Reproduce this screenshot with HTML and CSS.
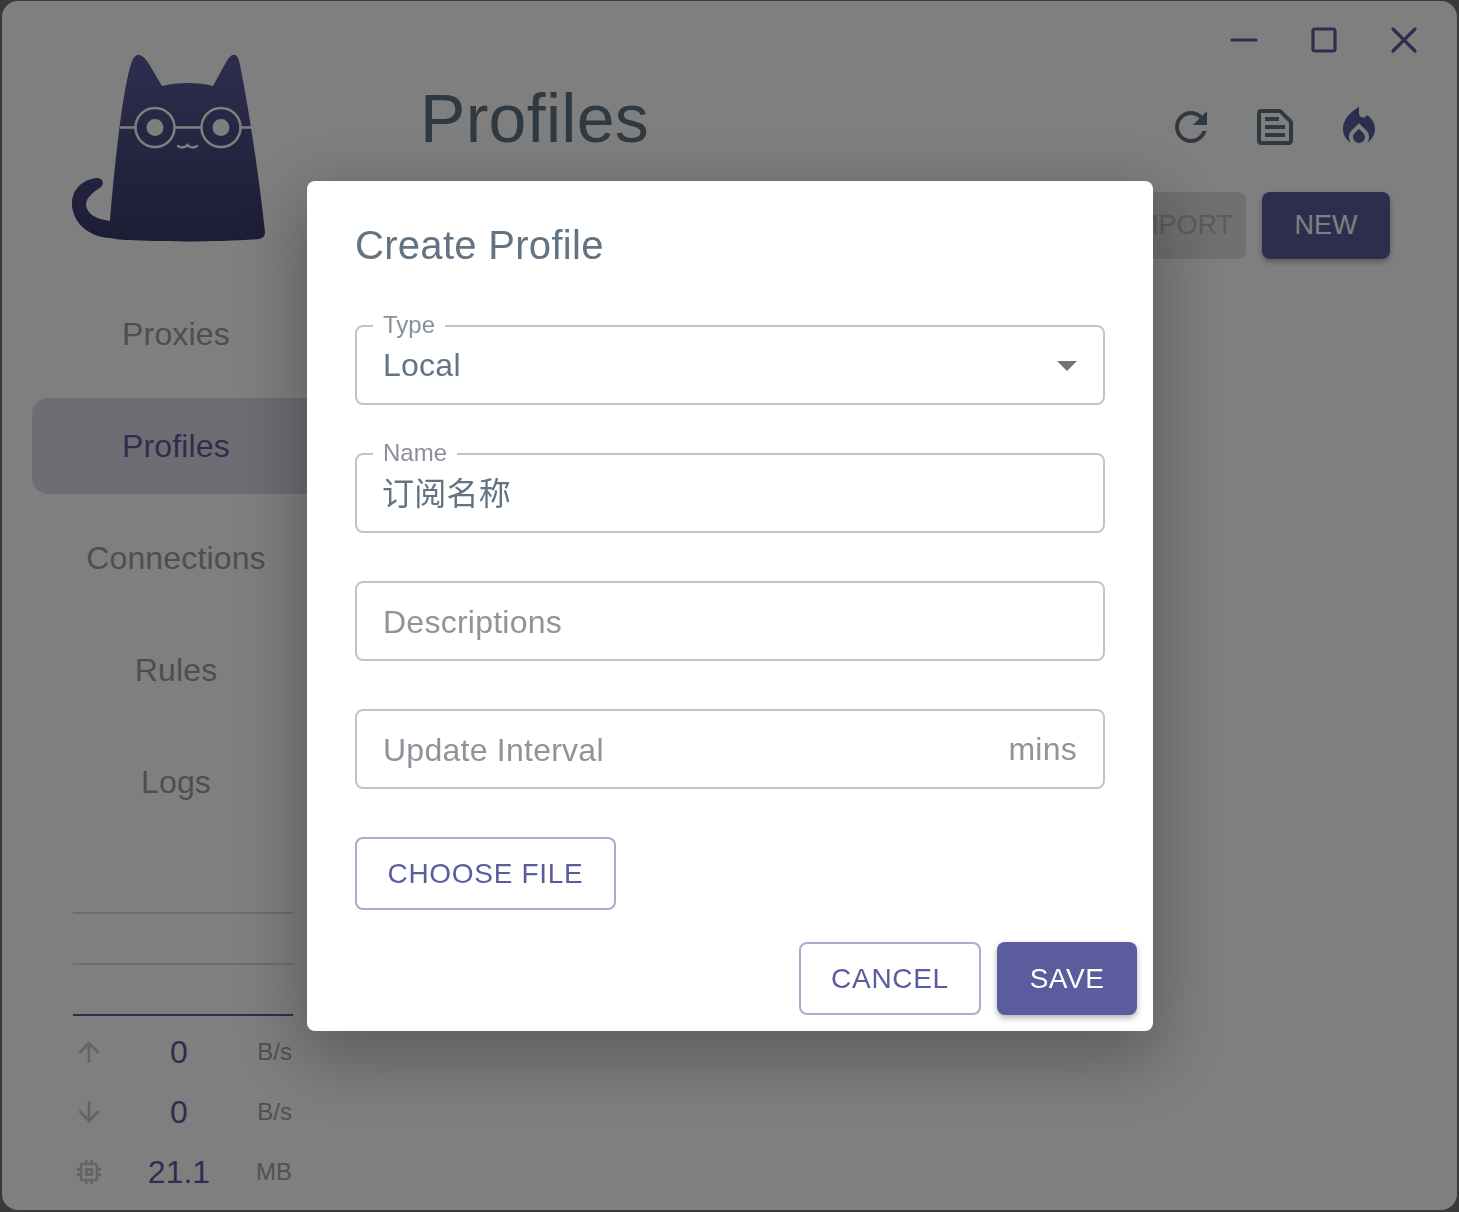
FILE: index.html
```html
<!DOCTYPE html>
<html lang="en">
<head>
    <meta charset="UTF-8">
    <title>Clash Verge</title>
    <link rel="stylesheet" href="styles.css">
</head>
<body>
    <div class="window">
        <aside class="sidebar">
            <svg class="logo" viewBox="0 0 196 188" width="196" height="188">
                <defs>
                    <linearGradient id="catFill" x1="0" y1="0" x2="0" y2="1">
                        <stop offset="0" stop-color="#5b5c9d"/>
                        <stop offset="1" stop-color="#3a3a6b"/>
                    </linearGradient>
                </defs>
                <path fill="url(#catFill)" d="M65 1C69 0 73 4 77 10L90 32C105 28 128 28 141 32L153 10C157 3 160 0 163 1C166 2 167 6 168 11C177 55 188 130 193 178C193 182 191 184 187 185C150 188 90 188 56 186C48 186 44 185 38 184C20 183 2 172 0 152C-1 136 10 126 24 124C30 123 33 129 29 133C20 139 14 144 14 151C15 160 24 165 38 167C42 120 50 35 60 7C61 4 63 2 65 1Z"/>
                <g class="glasses">
                    <path d="M48 73.500H63.500M102.500 73.500H129.500M168.500 73.500H180"/>
                    <circle cx="83" cy="73.500" r="19.500"/>
                    <circle cx="149" cy="73.500" r="19.500"/>
                    <path class="mouth" d="M106 92C109 94 113 94 115.500 91C118 94 122 94 125 92"/>
                </g>
                <circle class="pupil" cx="83" cy="73.500" r="8.500"/>
                <circle class="pupil" cx="149" cy="73.500" r="8.500"/>
            </svg>
            <nav class="nav">
                <a class="nav-item">Proxies</a>
                <a class="nav-item active">Profiles</a>
                <a class="nav-item">Connections</a>
                <a class="nav-item">Rules</a>
                <a class="nav-item">Logs</a>
            </nav>
            <div class="traffic">
                <div class="graph">
                    <div class="graph-line"></div>
                    <div class="graph-line"></div>
                    <div class="graph-line base"></div>
                </div>
                <div class="stat">
                    <svg class="stat-icon" viewBox="0 0 24 24"><path d="M4 12l1.410 1.410L11 7.830V20h2V7.830l5.580 5.590L20 12l-8-8-8 8z"/></svg>
                    <span class="stat-value">0</span>
                    <span class="stat-unit">B/s</span>
                </div>
                <div class="stat">
                    <svg class="stat-icon" viewBox="0 0 24 24"><path d="M20 12l-1.410-1.410L13 16.170V4h-2v12.170l-5.580-5.590L4 12l8 8 8-8z"/></svg>
                    <span class="stat-value">0</span>
                    <span class="stat-unit">B/s</span>
                </div>
                <div class="stat">
                    <svg class="stat-icon" viewBox="0 0 24 24"><path d="M15 9H9v6h6V9zm-2 4h-2v-2h2v2zm8-2V9h-2V7c0-1.100-.9-2-2-2h-2V3h-2v2h-2V3H9v2H7c-1.100 0-2 .9-2 2v2H3v2h2v2H3v2h2v2c0 1.100.9 2 2 2h2v2h2v-2h2v2h2v-2h2c1.100 0 2-.9 2-2v-2h2v-2h-2v-2h2zm-4 6H7V7h10v10z"/></svg>
                    <span class="stat-value">21.1</span>
                    <span class="stat-unit">MB</span>
                </div>
            </div>
        </aside>
        <main class="main">
            <div class="titlebar">
                <svg class="win-icon" viewBox="0 0 24 24"><path d="M6 12H18"/></svg>
                <svg class="win-icon" viewBox="0 0 24 24"><rect x="6.500" y="6.500" width="11" height="11" rx="1"/></svg>
                <svg class="win-icon" viewBox="0 0 24 24"><path d="M6.500 6.500L17.500 17.500M17.500 6.500L6.500 17.500"/></svg>
            </div>
            <header class="page-head">
                <h1 class="page-title">Profiles</h1>
                <div class="head-icons">
                    <svg class="head-icon slate" viewBox="0 0 24 24"><path d="M17.650 6.350C16.200 4.900 14.210 4 12 4c-4.420 0-7.990 3.580-7.990 8s3.570 8 7.990 8c3.730 0 6.840-2.550 7.730-6h-2.080c-.82 2.330-3.040 4-5.650 4-3.310 0-6-2.690-6-6s2.690-6 6-6c1.660 0 3.140.69 4.220 1.780L13 11h7V4l-2.350 2.350z"/></svg>
                    <svg class="head-icon slate" viewBox="0 0 24 24"><path d="M14.170 5 19 9.830V19H5V5h9.170m0-2H5c-1.100 0-2 .9-2 2v14c0 1.100.9 2 2 2h14c1.100 0 2-.9 2-2V9.830c0-.53-.21-1.040-.59-1.410l-4.830-4.830c-.37-.38-.88-.59-1.410-.59zM7 15h10v2H7v-2zm0-4h10v2H7v-2zm0-4h7v2H7V7z"/></svg>
                    <svg class="head-icon" viewBox="0 0 24 24"><path d="M12 12.900l-2.130 2.090c-.56.56-.87 1.290-.87 2.070C9 18.680 10.350 20 12 20s3-1.320 3-2.940c0-.78-.31-1.520-.87-2.070L12 12.900z"/><path d="M16 6l-.44.55C14.380 8.020 12 7.190 12 5.300V2S4 6 4 13c0 2.920 1.560 5.470 3.890 6.860-.56-.79-.89-1.760-.89-2.800 0-1.320.52-2.560 1.470-3.500L12 10.100l3.530 3.470c.95.93 1.470 2.170 1.470 3.500 0 1.020-.31 1.960-.85 2.750 1.890-1.150 3.290-3.060 3.710-5.300.66-3.460-1.060-6.770-3.860-8.520z"/></svg>
                </div>
            </header>
            <div class="head-actions">
                <button class="btn btn-disabled">IMPORT</button>
                <button class="btn btn-new">NEW</button>
            </div>
        </main>
    </div>

    <div class="backdrop"></div>

    <div class="dialog">
        <h2 class="dialog-title">Create Profile</h2>
        <div class="dialog-body">
            <div class="field">
                <span class="field-label">Type</span>
                <span class="field-value">Local</span>
                <span class="caret"></span>
            </div>
            <div class="field">
                <span class="field-label">Name</span>
                <span class="field-value cjk">订阅名称</span>
            </div>
            <div class="field">
                <span class="field-hint">Descriptions</span>
            </div>
            <div class="field">
                <span class="field-hint">Update Interval</span>
                <span class="field-suffix">mins</span>
            </div>
            <button class="btn btn-outline btn-file">CHOOSE FILE</button>
        </div>
        <div class="dialog-actions">
            <button class="btn btn-outline btn-cancel">CANCEL</button>
            <button class="btn btn-save">SAVE</button>
        </div>
    </div>
</body>
</html>
```

FILE: styles.css
```css
* {
    margin: 0;
    padding: 0;
    box-sizing: border-box;
    font-family: 'Liberation Sans', Arial, 'Noto Sans CJK SC', sans-serif;
}

html, body {
    height: 100%;
    overflow: hidden;
    background: #747474;
}

.window {
    margin: 1px 2px 2px;
    height: 1209px;
    display: flex;
    background: #fff;
    border-radius: 16px;
    overflow: hidden;
}

.sidebar {
    width: 348px;
    padding: 53px 30px 0;
    flex-shrink: 0;
    display: flex;
    flex-direction: column;
    align-items: center;
}

.logo {
    margin-left: -13px;
    flex-shrink: 0;
}

.glasses {
    fill: none;
    stroke: #fff;
    stroke-width: 2.500;
}

.mouth {
    stroke-linecap: round;
}

.pupil {
    fill: #fff;
}

.nav {
    width: 288px;
    margin-top: 44px;
    display: flex;
    flex-direction: column;
    gap: 16px;
}

.nav-item {
    height: 96px;
    display: flex;
    align-items: center;
    justify-content: center;
    font-size: 32px;
    letter-spacing: 0.15px;
    color: #9c9da3;
    border-radius: 16px;
}

.nav-item.active {
    background: #dcdbe6;
    color: #5b5c9d;
}

.traffic {
    width: 220px;
    margin-top: 82px;
    margin-left: 14px;
}

.graph {
    height: 104px;
    display: flex;
    flex-direction: column;
    justify-content: space-between;
}

.graph-line {
    height: 2px;
    background: #dcdcdc;
}

.graph-line.base {
    background: #5b5c9d;
}

.stat {
    height: 60px;
    display: flex;
    align-items: center;
}

.graph + .stat {
    margin-top: 6px;
}

.stat-icon {
    width: 32px;
    height: 32px;
    fill: #c8c8c8;
    flex-shrink: 0;
}

.stat-value {
    flex: 1;
    text-align: center;
    font-size: 32px;
    color: #5b5c9d;
}

.stat-unit {
    width: 40px;
    padding-right: 1px;
    text-align: right;
    font-size: 24px;
    color: #a2a2a2;
}

.main {
    flex: 1;
    padding-right: 67px;
    display: flex;
    flex-direction: column;
}

.titlebar {
    height: 78px;
    margin-right: -67px;
    padding-right: 29px;
    display: flex;
    justify-content: flex-end;
    align-items: center;
    gap: 32px;
}

.win-icon {
    width: 48px;
    height: 48px;
    fill: none;
    stroke: #5b5c9d;
    stroke-width: 1.600;
    stroke-linecap: round;
}

.page-head {
    display: flex;
    align-items: center;
    justify-content: space-between;
    padding-left: 70px;
    height: 77px;
}

.page-title {
    font-size: 68px;
    font-weight: 400;
    color: #637381;
    letter-spacing: 0.3px;
}

.head-icons {
    display: flex;
    gap: 36px;
    padding-top: 18px;
    margin-right: 7px;
}

.head-icon {
    width: 48px;
    height: 48px;
    fill: #5b5c9d;
}

.head-icon.slate {
    fill: #637381;
}

.head-actions {
    margin-top: 36px;
    display: flex;
    justify-content: flex-end;
    gap: 16px;
}

.btn {
    font-size: 28px;
    height: 67px;
    border-radius: 8px;
    border: none;
    white-space: nowrap;
}

.btn-disabled {
    width: 180px;
    padding-right: 13px;
    text-align: right;
    font-size: 27px;
    background: #e0e0e0;
    color: #b8b8b8;
}

.btn-new {
    width: 128px;
    font-size: 27px;
    background: #5b5c9d;
    color: #fff;
    box-shadow: 0 3px 6px rgba(0, 0, 0, 0.3);
}

.backdrop {
    position: fixed;
    inset: 0;
    background: rgba(0, 0, 0, 0.5);
}

.dialog {
    position: fixed;
    left: 307px;
    top: 181px;
    width: 846px;
    height: 850px;
    background: #fff;
    border-radius: 8px;
    box-shadow: 0 22px 70px 8px rgba(0, 0, 0, 0.28);
    display: flex;
    flex-direction: column;
}

.dialog-title {
    font-size: 40px;
    font-weight: 400;
    color: #637381;
    padding: 40px 48px 0;
    line-height: 48px;
    letter-spacing: 0.3px;
}

.dialog-body {
    padding: 0 48px;
    margin-top: 56px;
    display: flex;
    flex-direction: column;
    gap: 48px;
    align-items: flex-start;
}

.field {
    position: relative;
    width: 100%;
    height: 80px;
    border: 2px solid #c4c4c4;
    border-radius: 8px;
    padding: 0 26px;
    display: flex;
    align-items: center;
    justify-content: space-between;
}

.field-label {
    position: absolute;
    left: 16px;
    top: -16px;
    padding: 0 10px;
    background: #fff;
    font-size: 24px;
    line-height: 28px;
    color: #8a9099;
}

.field-value {
    font-size: 32px;
    color: #637381;
    letter-spacing: 0.25px;
}

.field-value.cjk {
    margin-left: -1px;
    padding-bottom: 4px;
}

.field-hint {
    padding-top: 2px;
    font-size: 32px;
    color: #8f939b;
    letter-spacing: 0.25px;
}

.field-suffix {
    font-size: 32px;
    color: #8f939b;
    letter-spacing: 0.25px;
}

.caret {
    width: 0;
    height: 0;
    margin-top: 2px;
    border-left: 10px solid transparent;
    border-right: 10px solid transparent;
    border-top: 10px solid #737373;
}

.btn-outline {
    height: 73px;
    background: #fff;
    border: 2px solid #aea9cf;
    color: #5b5c9d;
    letter-spacing: 0.7px;
}

.btn-file {
    width: 261px;
}

.btn-cancel {
    width: 182px;
}

.dialog-actions {
    margin-top: 32px;
    padding: 0 16px;
    display: flex;
    justify-content: flex-end;
    gap: 16px;
}

.btn-save {
    width: 140px;
    height: 73px;
    background: #5b5c9d;
    color: #fff;
    letter-spacing: 0.5px;
    box-shadow: 0 3px 6px rgba(0, 0, 0, 0.3);
}
```
